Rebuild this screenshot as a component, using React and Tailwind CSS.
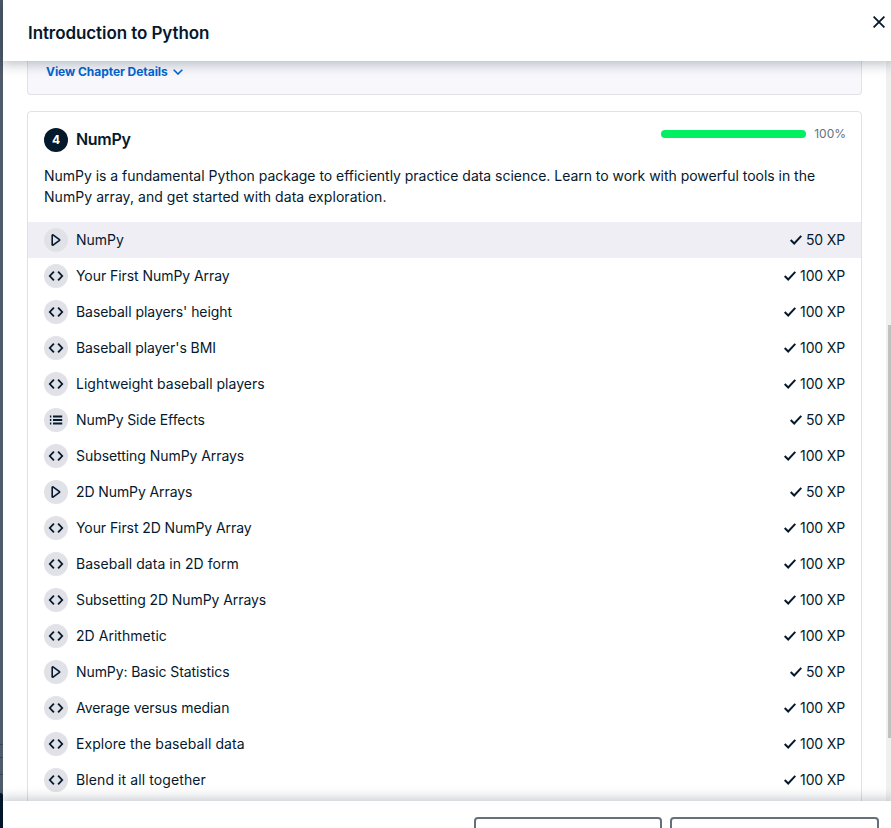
const exercises = [
  { kind: 'video', title: 'NumPy', xp: 50, tracking: 'tracking-normal' },
  { kind: 'code', title: 'Your First NumPy Array', xp: 100, tracking: 'tracking-[-0.06px]' },
  { kind: 'code', title: "Baseball players' height", xp: 100, tracking: 'tracking-[-0.05px]' },
  { kind: 'code', title: "Baseball player's BMI", xp: 100, tracking: 'tracking-[-0.08px]' },
  { kind: 'code', title: 'Lightweight baseball players', xp: 100, tracking: 'tracking-normal' },
  { kind: 'list', title: 'NumPy Side Effects', xp: 50, tracking: 'tracking-[-0.1px]' },
  { kind: 'code', title: 'Subsetting NumPy Arrays', xp: 100, tracking: 'tracking-[-0.06px]' },
  { kind: 'video', title: '2D NumPy Arrays', xp: 50, tracking: 'tracking-[-0.1px]' },
  { kind: 'code', title: 'Your First 2D NumPy Array', xp: 100, tracking: 'tracking-[-0.08px]' },
  { kind: 'code', title: 'Baseball data in 2D form', xp: 100, tracking: 'tracking-[0.04px]' },
  { kind: 'code', title: 'Subsetting 2D NumPy Arrays', xp: 100, tracking: 'tracking-[-0.08px]' },
  { kind: 'code', title: '2D Arithmetic', xp: 100, tracking: 'tracking-[0.04px]' },
  { kind: 'video', title: 'NumPy: Basic Statistics', xp: 50, tracking: 'tracking-[-0.1px]' },
  { kind: 'code', title: 'Average versus median', xp: 100, tracking: 'tracking-[-0.07px]' },
  { kind: 'code', title: 'Explore the baseball data', xp: 100, tracking: 'tracking-[0.07px]' },
  { kind: 'code', title: 'Blend it all together', xp: 100, tracking: 'tracking-[0.1px]' },
];

function KindIcon({ kind }) {
  return (
    <span className="flex size-6 shrink-0 items-center justify-center rounded-full bg-[#e1e1e8]">
      <svg viewBox="0 0 24 24" className="size-6" fill="none" stroke="#05192d" strokeWidth="1.8">
        {kind === 'video' && (
          <path d="M8.200 7.300v9.400a.5.5 0 0 0 .8.4l6.500-4.700a.5.5 0 0 0 0-.8L9 6.900a.5.5 0 0 0-.8.4Z" strokeLinejoin="round" strokeWidth="1.6" />
        )}
        {kind === 'code' && <path d="m9.900 7.600-4.100 4.400 4.100 4.400M14.100 7.600l4.100 4.400-4.100 4.400" />}
        {kind === 'list' && (
          <path d="M9 8.500h9.200M9 12h9.200M9 15.500h9.200M5.900 8.500h1.400M5.900 12h1.400M5.900 15.500h1.400" strokeWidth="1.9" />
        )}
      </svg>
    </span>
  );
}

function ExerciseRow({ kind, title, xp, tracking, active }) {
  return (
    <li className={`flex h-9 items-center px-4 ${active ? 'bg-[#efeef5]' : ''}`}>
      <KindIcon kind={kind} />
      <span className={`ml-2 whitespace-nowrap ${tracking}`}>{title}</span>
      <svg viewBox="0 0 12 10" className="ml-auto h-2.5 w-3" fill="none" stroke="#05192d" strokeWidth="2">
        <path d="m.7 5 3.500 3.500L11.300.9" />
      </svg>
      <span className="ml-1 whitespace-nowrap tracking-[-0.15px]">{xp} XP</span>
    </li>
  );
}

export default function App() {
  return (
    <div className="flex h-[828px] w-[891px] overflow-hidden bg-white font-['Inter',sans-serif] text-sm text-[#05192d]">
      <div className="flex w-[3px] shrink-0 flex-col bg-[#4f5b6a]">
        <div className="mt-[744px] h-px bg-[#36465a]" />
        <div className="mt-3 h-px bg-[#36465a]" />
        <div className="mt-4 h-px bg-[#36465a]" />
        <div className="mt-4.5 grow rounded-tr bg-[#03162a]" />
      </div>
      <div className="flex min-w-0 grow flex-col">
        <header className="z-10 flex h-[61px] shrink-0 justify-between bg-white pl-[25px] shadow-[0_1px_12px_2px_rgba(5,25,45,0.28)]">
          <h1 className="mt-[21px] text-[17px] leading-6 font-semibold tracking-[-0.08px]">Introduction to Python</h1>
          <svg viewBox="0 0 12 12" className="mt-4 mr-1.5 size-3" fill="none" stroke="#05192d" strokeWidth="1.8">
            <path d="m.6.6 10.800 10.800M11.400.6.6 11.400" />
          </svg>
        </header>
        <div className="flex h-[740px] shrink-0 justify-between overflow-hidden pl-6">
          <main className="w-[835px]">
            <section className="h-[34px] rounded-b border border-t-0 border-[#e1e1e8] bg-[#f7f7fc] pl-[18px]">
              <a className="flex items-center gap-[5px] text-xs leading-[21px] font-bold tracking-[-0.05px] text-[#0065d1]">
                View Chapter Details
                <svg viewBox="0 0 10 6" className="h-1.5 w-2.5" fill="none" stroke="#0065d1" strokeWidth="1.6">
                  <path d="m.7.7 4.300 4.300L9.300.7" />
                </svg>
              </a>
            </section>
            <section className="mt-4 h-[720px] rounded border border-[#e1e1e8]">
              <div className="flex h-[53px] pr-[15px] pl-4">
                <span className="mt-4 flex size-6 items-center justify-center rounded-full bg-[#05192d] text-xs font-bold text-white">4</span>
                <h2 className="mt-[15px] ml-2 text-base leading-6 font-semibold tracking-[-0.3px]">NumPy</h2>
                <div className="mt-[18px] ml-auto h-2 w-[145px] rounded-full bg-[#03ef62]" />
                <span className="mt-3.5 ml-2 text-xs leading-4 text-[#65707c]">100%</span>
              </div>
              <p className="h-[57px] px-4 leading-[21px] whitespace-nowrap">
                <span className="tracking-[-0.025px]">
                  NumPy is a fundamental Python package to efficiently practice data science. Learn to work with powerful tools in the
                </span>
                <br />
                <span className="tracking-[0.05px]">NumPy array, and get started with data exploration.</span>
              </p>
              <ul>
                {exercises.map((exercise, index) => (
                  <ExerciseRow key={exercise.title} {...exercise} active={index === 0} />
                ))}
              </ul>
            </section>
          </main>
          <div className="flex w-[5px] flex-col items-end bg-[#f0f0f0]">
            <div className="mt-[264px] h-[413px] w-[3px] bg-[#c1c1c1]" />
          </div>
        </div>
        <footer className="z-10 flex h-[27px] shrink-0 gap-2 overflow-hidden bg-white pt-4 pl-[471px] shadow-[0_-1px_12px_2px_rgba(5,25,45,0.22)]">
          <div className="h-10 w-[188px] rounded border-2 border-[#65707c]" />
          <div className="h-10 w-[209px] rounded border-2 border-[#65707c]" />
        </footer>
      </div>
    </div>
  );
}
